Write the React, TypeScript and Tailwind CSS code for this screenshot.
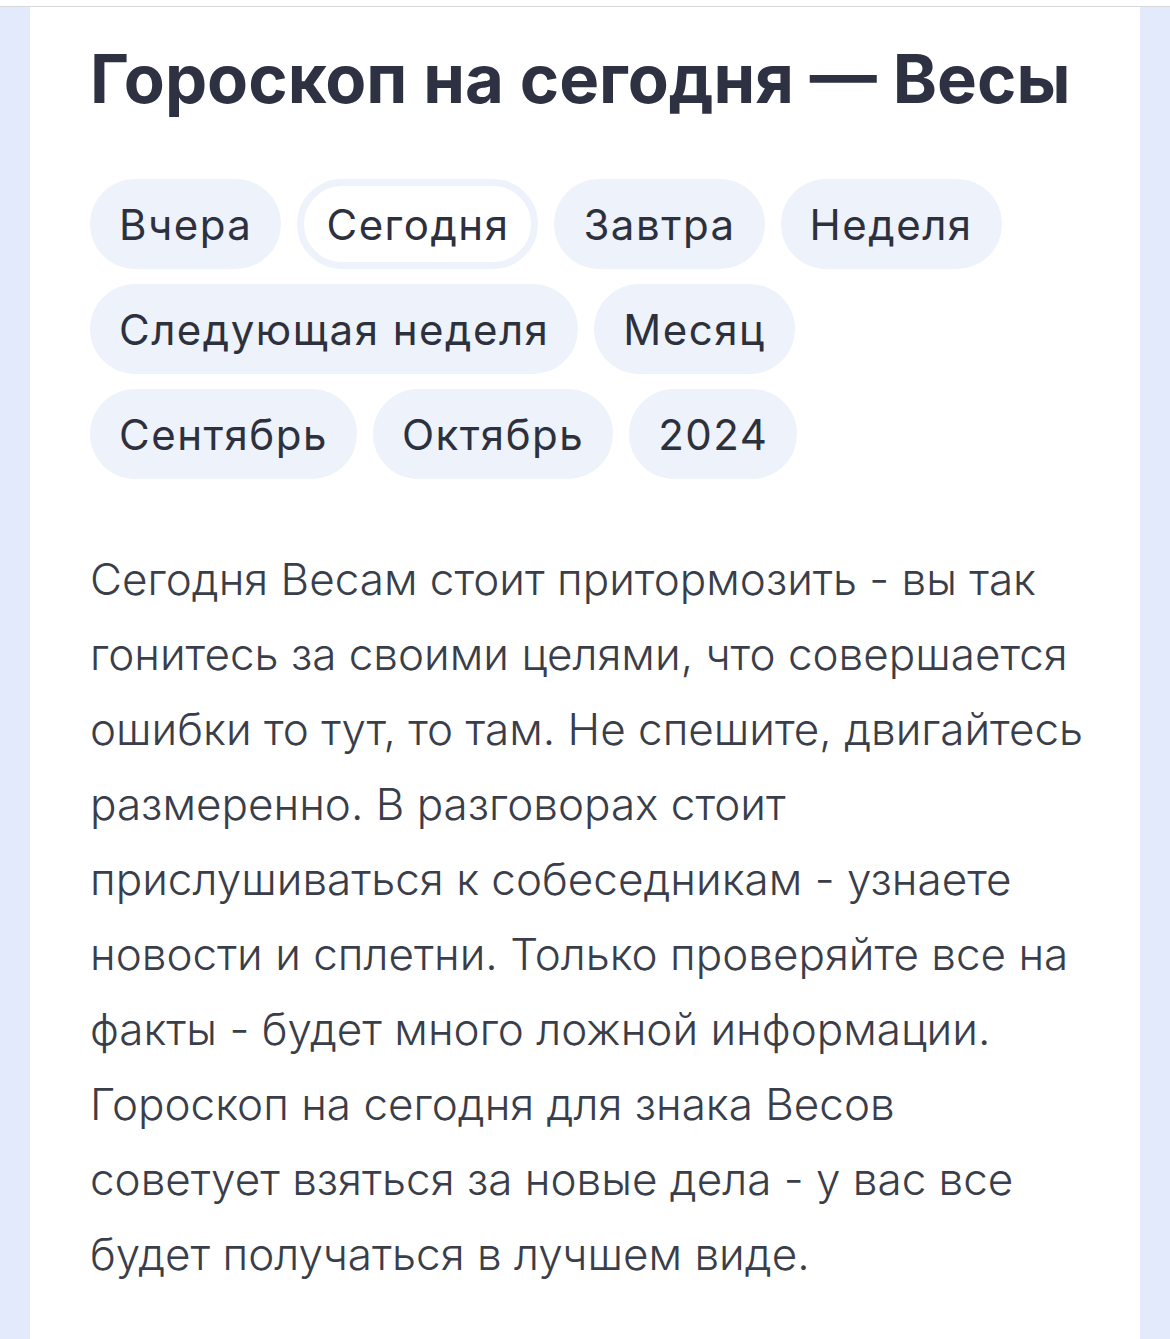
const tabs = [
  ['Вчера', 'Сегодня', 'Завтра', 'Неделя'],
  ['Следующая неделя', 'Месяц'],
  ['Сентябрь', 'Октябрь', '2024'],
]

const lines = [
  'Сегодня Весам стоит притормозить - вы так',
  'гонитесь за своими целями, что совершается',
  'ошибки то тут, то там. Не спешите, двигайтесь',
  'размеренно. В разговорах стоит',
  'прислушиваться к собеседникам - узнаете',
  'новости и сплетни. Только проверяйте все на',
  'факты - будет много ложной информации.',
  'Гороскоп на сегодня для знака Весов',
  'советует взяться за новые дела - у вас все',
  'будет получаться в лучшем виде.',
]

function Pill({ label, active }: { label: string; active?: boolean }) {
  return (
    <span
      className={
        active
          ? 'h-[90px] px-[22px] flex items-center rounded-full bg-white border-[7px] border-[#eef2fb] text-[42px] tracking-[1.5px] text-[#2d313d]'
          : 'h-[90px] px-[29px] flex items-center rounded-full bg-[#eef2fb] text-[42px] tracking-[1.5px] text-[#2d313d]'
      }
    >
      {label}
    </span>
  )
}

export default function App() {
  return (
    <div className="min-h-[1339px] bg-white font-['Inter',sans-serif]">
      <div className="h-[7px] border-b border-[#d6d8dc] bg-white" />
      <div className="flex min-h-[1332px] bg-[#e3eafb]">
        <div className="w-[30px] shrink-0" />
        <main className="flex-1 min-w-0 bg-white px-[60px] pt-[27px] pb-[40px]">
          <h1 className="text-[67px] leading-[90px] font-bold text-[#2d3142] tracking-[0px] whitespace-nowrap">
            Гороскоп на сегодня — Весы
          </h1>

          {/* Tabs */}
          <div className="mt-[55px] flex flex-col gap-[15px]">
            {tabs.map((row, i) => (
              <div key={i} className="flex gap-[16px]">
                {row.map(t => (
                  <Pill key={t} label={t} active={t === 'Сегодня'} />
                ))}
              </div>
            ))}
          </div>

          <div className="mt-[63px] text-[44px] leading-[75px] text-[#3a3e4a] tracking-[0px] font-light">
            {lines.map(l => (
              <p key={l} className="whitespace-nowrap">{l}</p>
            ))}
          </div>
        </main>
        <div className="w-[30px] shrink-0" />
      </div>
    </div>
  )
}
